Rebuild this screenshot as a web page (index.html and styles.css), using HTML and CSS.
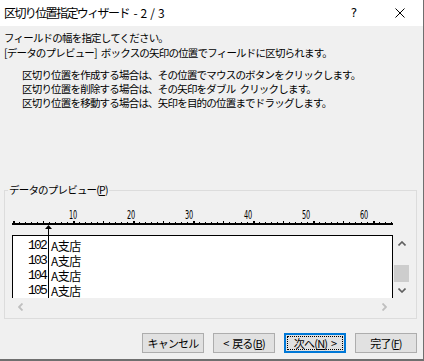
FILE: index.html
```html
<!DOCTYPE html>
<html>
<head>
  <meta charset="utf-8">
  <title>区切り位置指定ウィザード</title>
  <link rel="stylesheet" href="styles.css">
</head>
<body>
  <div class="dialog">
    <!-- Title bar -->
    <div class="title-bar">
      <span class="title">区切り位置指定ウィザード - 2 / 3</span>
      <span class="title-btn help">?</span>
      <span class="title-btn close">
        <svg viewBox="0 0 10 10" width="10" height="10">
          <path d="M0.5 0.5L9.5 9.5M9.5 0.5L0.5 9.5" stroke="#000" stroke-width="1"/>
        </svg>
      </span>
    </div>

    <div class="content">
      <p class="intro">フィールドの幅を指定してください。<br>[データのプレビュー] ボックスの矢印の位置でフィールドに区切られます。</p>
      <ul class="hints">
        <li>区切り位置を作成する場合は、その位置でマウスのボタンをクリックします。</li>
        <li>区切り位置を削除する場合は、その矢印をダブル クリックします。</li>
        <li>区切り位置を移動する場合は、矢印を目的の位置までドラッグします。</li>
      </ul>

      <!-- Data preview -->
      <fieldset class="group">
        <legend>データのプレビュー(<u>P</u>)</legend>
        <div class="ruler">
          <div class="ruler-labels">
            <span>10</span><span>20</span><span>30</span><span>40</span><span>50</span><span>60</span>
          </div>
          <div class="ruler-ticks"></div>
        </div>
        <div class="preview">
          <svg class="break-arrow" viewBox="0 0 7 73" width="7" height="73">
            <path d="M3.5 0L7 4H0Z" fill="#000"/>
            <rect x="3" y="3" width="1" height="70" fill="#000"/>
          </svg>
          <div class="data">
            <div class="row"><span class="num">102</span><span class="name">A支店</span></div>
            <div class="row"><span class="num">103</span><span class="name">A支店</span></div>
            <div class="row"><span class="num">104</span><span class="name">A支店</span></div>
            <div class="row"><span class="num">105</span><span class="name">A支店</span></div>
          </div>
          <div class="vscroll">
            <span class="sb-btn up">
              <svg viewBox="0 0 8 5" width="8" height="5"><path d="M0.5 4.5L4 1L7.5 4.5" fill="none" stroke="#606060" stroke-width="1.6"/></svg>
            </span>
            <span class="track"><span class="thumb"></span></span>
            <span class="sb-btn down">
              <svg viewBox="0 0 8 5" width="8" height="5"><path d="M0.5 0.5L4 4L7.5 0.5" fill="none" stroke="#606060" stroke-width="1.6"/></svg>
            </span>
          </div>
          <div class="hscroll">
            <span class="sb-btn">
              <svg viewBox="0 0 5 8" width="5" height="8"><path d="M4.5 0.5L1 4L4.5 7.5" fill="none" stroke="#bfbfbf" stroke-width="1.8"/></svg>
            </span>
            <span class="sb-btn">
              <svg viewBox="0 0 5 8" width="5" height="8"><path d="M0.5 0.5L4 4L0.5 7.5" fill="none" stroke="#bfbfbf" stroke-width="1.8"/></svg>
            </span>
          </div>
        </div>
      </fieldset>

      <div class="buttons">
        <button class="btn">キャンセル</button>
        <button class="btn">&lt; 戻る(<u>B</u>)</button>
        <button class="btn default">次へ(<u>N</u>) &gt;</button>
        <button class="btn">完了(<u>F</u>)</button>
      </div>
    </div>
  </div>
</body>
</html>
```

FILE: styles.css
```css
body {
  margin: 0;
  background: #fff;
  font-family: 'Noto Sans CJK JP', 'Noto Sans', sans-serif;
  font-size: 11px;
  color: #000;
}

.dialog {
  width: 423px;
  height: 359px;
  border-right: 1px solid #6f6f6f;
  border-bottom: 2px solid #6f6f6f;
  background: #f0f0f0;
  display: flex;
  flex-direction: column;
}

/* Title bar */
.title-bar {
  height: 26px;
  background: #fff;
  display: flex;
  align-items: center;
}

.title {
  flex: 1;
  padding-left: 4px;
  font-size: 12px;
  letter-spacing: -1.6px;
  word-spacing: 3.5px;
  line-height: 26px;
}

.title-btn {
  width: 46px;
  height: 26px;
  display: flex;
  align-items: center;
  justify-content: center;
}

.title-btn.help {
  font-family: 'DejaVu Sans', sans-serif;
  font-size: 12px;
}

/* Body */
.content {
  flex: 1;
  padding: 0 6px 0 4px;
}

.intro {
  margin: 4px 0 0 0;
  line-height: 15px;
  font-size: 10.5px;
  letter-spacing: -0.8px;
  word-spacing: 2.5px;
}

.hints {
  list-style: none;
  margin: 8px 0 0 0;
  padding-left: 18px;
  line-height: 14px;
  font-size: 10.5px;
  letter-spacing: -0.8px;
  word-spacing: 2.5px;
}

/* Group box */
.group {
  margin: 73px 0 0 0;
  padding: 12px 0 3px 7px;
  border: 1px solid #dcdcdc;
  min-width: 0;
}

.group legend {
  margin-left: -4px;
  padding: 0 1px;
  line-height: 14px;
  font-size: 10.5px;
  letter-spacing: -0.8px;
}

.ruler {
  width: 381px;
}

.ruler-labels {
  display: flex;
  margin-left: 32px;
  height: 12px;
}

.ruler-labels span {
  width: 60px;
  text-align: center;
  font-family: 'DejaVu Sans Condensed', 'DejaVu Sans', sans-serif;
  font-size: 13px;
  line-height: 12px;
  transform: scaleX(0.56);
}

.ruler-ticks {
  height: 4px;
  background:
    linear-gradient(#000, #000) left bottom / 100% 2px no-repeat,
    repeating-linear-gradient(90deg, #000 0 2px, transparent 2px 60px) 1px 0 / 100% 4px no-repeat,
    repeating-linear-gradient(90deg, #000 0 1px, transparent 1px 30px) 1px 0 / 100% 4px no-repeat,
    repeating-linear-gradient(90deg, #000 0 1px, transparent 1px 6px) 1px 1px / 100% 3px no-repeat;
}

.preview {
  position: relative;
  margin-top: 10px;
  display: grid;
  grid-template-columns: 381px 17px;
  grid-template-rows: 63px 17px;
}

.break-arrow {
  position: absolute;
  left: 33px;
  top: -10px;
}

.data {
  background: #fff;
  border: 1px solid #000;
  border-bottom: none;
  padding-top: 2px;
  overflow: hidden;
}

.row {
  display: flex;
  height: 15px;
  line-height: 15px;
}

.num {
  width: 33px;
  text-align: right;
  font-family: 'Liberation Mono', monospace;
  font-size: 13px;
  letter-spacing: -1.8px;
}

.name {
  padding-left: 5px;
  font-size: 12px;
  letter-spacing: -0.5px;
}

/* Scroll bars */
.vscroll {
  display: flex;
  flex-direction: column;
  background: #f0f0f0;
}

.sb-btn {
  display: flex;
  align-items: center;
  justify-content: center;
  width: 17px;
  height: 17px;
}

.vscroll .down {
  height: 16px;
}

.track {
  flex: 1;
  display: flex;
  flex-direction: column;
  justify-content: flex-end;
}

.thumb {
  height: 17px;
  margin: 0 1px;
  background: #cdcdcd;
}

.hscroll {
  display: flex;
  justify-content: space-between;
  align-items: center;
  background: #f0f0f0;
}

/* Buttons */
.buttons {
  display: flex;
  justify-content: flex-end;
  gap: 9px;
  margin-top: 14px;
}

.btn {
  width: 62px;
  height: 20px;
  padding: 0;
  background: #e1e1e1;
  border: 1px solid #adadad;
  font-family: inherit;
  font-size: 11px;
  letter-spacing: -0.8px;
  word-spacing: 2px;
  line-height: 16px;
  color: #000;
}

.btn.default {
  border: 2px solid #0078d7;
  outline: 1px dotted #000;
  outline-offset: -4px;
}
```
